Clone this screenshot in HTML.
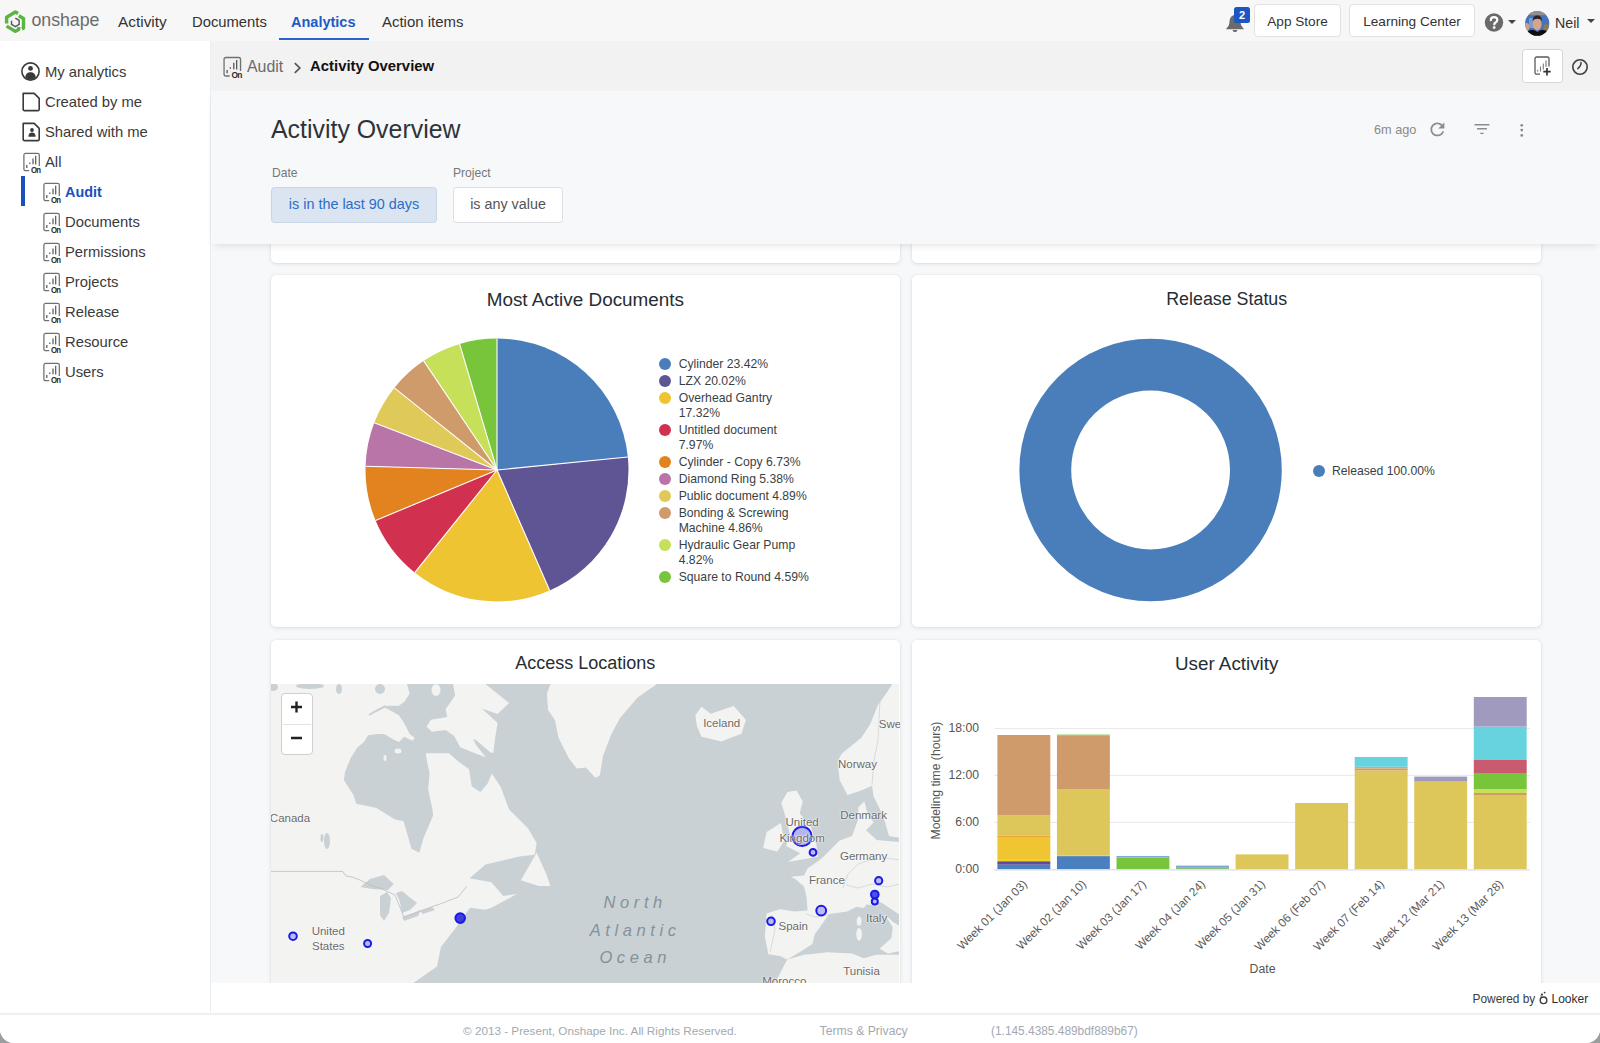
<!DOCTYPE html>
<html><head><meta charset="utf-8">
<style>
*{box-sizing:border-box;margin:0;padding:0}
html,body{width:1600px;height:1043px;overflow:hidden;background:#9a9d9d}
body{font-family:"Liberation Sans",sans-serif;color:#333;position:relative}
#win{position:absolute;left:0;top:0;width:1600px;height:1043px;background:#fff;border-radius:0 0 14px 14px;overflow:hidden}
.abs{position:absolute}
#topnav{position:absolute;left:0;top:0;width:1600px;height:41px;background:#f7f7f7}
.nav{position:absolute;top:13px;font-size:14.5px;color:#333;white-space:nowrap}
#side{position:absolute;left:0;top:41px;width:211px;height:972px;background:#fff;border-right:1.5px solid #e9eef3}
.btn{position:absolute;top:3.7px;height:33.7px;background:#fff;border:1px solid #e2e2e2;border-radius:4px;font-size:13.6px;color:#333;text-align:center;line-height:34px;white-space:nowrap}
.caret{position:absolute;width:0;height:0;border-left:4px solid transparent;border-right:4px solid transparent;border-top:4.5px solid #444}
.si{position:absolute;font-size:14.8px;color:#3a3a3a;white-space:nowrap}
#crumb{position:absolute;left:211px;top:41px;width:1389px;height:49.5px;background:#f2f2f2;z-index:3}
#hdr{position:absolute;left:211px;top:90.5px;width:1389px;height:153.5px;background:#f6f8fa;box-shadow:0 4px 8px -3px rgba(0,0,0,.12);z-index:2}
#tiles{position:absolute;left:211px;top:90px;width:1389px;height:893px;background:#f6f8fa;overflow:hidden}
.tile{position:absolute;background:#fff;border-radius:5px;box-shadow:0 0 0 0.5px rgba(0,0,0,.035),0 1px 4px rgba(40,50,60,.12)}
.ttl{position:absolute;left:0;width:100%;text-align:center;font-size:18.5px;color:#262d33}
.dot{position:absolute;width:12px;height:12px;border-radius:50%}
.lg{position:absolute;font-size:12.2px;line-height:15px;color:#3a3f44;white-space:nowrap}
.xl{position:absolute;width:200px;text-align:right;font-size:11.8px;line-height:14px;margin-top:-7px;color:#5a5a5a;transform-origin:100% 50%;transform:rotate(-45deg);white-space:nowrap}
.yl{position:absolute;width:60px;text-align:right;font-size:12.2px;line-height:15px;color:#555}
.ml{position:absolute;width:100px;text-align:center;font-size:11.5px;line-height:14px;color:#6a6a6a;text-shadow:0 0 2px #fff,0 0 2px #fff;white-space:nowrap}
.oc{position:absolute;width:120px;text-align:center;font-size:16.5px;line-height:20px;color:#85919a;font-style:italic;letter-spacing:4.6px;text-indent:4.6px;white-space:nowrap}
#foot1{position:absolute;left:211px;top:983px;width:1389px;height:30px;background:#fff}
#foot2{position:absolute;left:0;top:1013px;width:1600px;height:30px;background:#fff;border-top:2px solid #eef0f4}
</style></head><body>
<div id="win">
<div id="topnav">
  <svg class="abs" style="left:2.9px;top:8.5px" width="24.7" height="24.7" viewBox="0 0 26 26">
    <g fill="none" stroke="#5ab543" stroke-width="3.6" stroke-linejoin="round" stroke-linecap="butt">
      <path d="M3.8 15.2 V8.6 L13 3.2 L15.8 4.8"/>
      <path d="M16.6 7.2 L21.6 10.1 V20 L20 21"/>
      <path d="M3.8 18 L13 23.6 L16.5 21.5 V19"/>
    </g>
    <path d="M13 9.6 L17 12 V16.3 L13 18.6 L9 16.3 V12.5" fill="none" stroke="#555" stroke-width="1.5" stroke-linejoin="round"/>
  </svg>
  <div class="abs" style="left:31.5px;top:9.8px;font-size:17.8px;color:#6b6b6b;letter-spacing:-0.05px">onshape</div>
  <div class="nav" style="left:118px;top:12.9px;font-size:15.4px">Activity</div>
  <div class="nav" style="left:192px;top:14.2px;font-size:14.8px">Documents</div>
  <div class="nav" style="left:291px;top:13.7px;color:#1d5bc6;font-weight:bold;font-size:14.5px">Analytics</div>
  <div class="abs" style="left:279px;top:38px;width:90px;height:2px;background:#2b63cf"></div>
  <div class="nav" style="left:382px;top:13.3px;font-size:14.95px">Action items</div>
  <svg class="abs" style="left:1225px;top:12px" width="20" height="21" viewBox="0 0 20 21"><path d="M1 17.2 C1.5 15.8 4 14.5 4.3 11.5 L4.6 8.8 C5 5.2 7.2 3 10 3 C12.8 3 15 5.2 15.4 8.8 L15.7 11.5 C16 14.5 18.5 15.8 19 17.2 Z M7.6 18 C7.8 19.4 8.8 20 10 20 C11.2 20 12.2 19.4 12.4 18 Z" fill="#6a6a6a"/></svg>
  <div class="abs" style="left:1234px;top:7px;width:16px;height:16px;background:#1a56c4;border-radius:2.5px;color:#fff;font-weight:bold;font-size:11px;text-align:center;line-height:16px">2</div>
  <div class="btn" style="left:1254px;width:87px">App Store</div>
  <div class="btn" style="left:1349px;width:126px">Learning Center</div>
  <svg class="abs" style="left:1484px;top:12px" width="20" height="21" viewBox="0 0 20 21"><circle cx="10" cy="10.5" r="9.2" fill="#6a6a6a"/><path d="M6.8 8.2 C6.8 6.2 8.2 5.2 10 5.2 C11.9 5.2 13.3 6.3 13.3 8 C13.3 9.6 12.2 10.2 11.2 10.8 C10.5 11.2 10.3 11.6 10.3 12.5" fill="none" stroke="#fff" stroke-width="2.2" stroke-linecap="round"/><circle cx="10.2" cy="15.6" r="1.4" fill="#fff"/></svg>
  <div class="caret" style="left:1508px;top:20px"></div>
  <svg class="abs" style="left:1525px;top:10.5px" width="24.5" height="25" viewBox="0 0 24.5 25"><defs><clipPath id="avc"><ellipse cx="12.2" cy="12.4" rx="12.1" ry="12.4"/></clipPath></defs><g clip-path="url(#avc)">
<rect x="0" y="0" width="25" height="25" fill="#4572b8"/>
<rect x="0" y="0" width="25" height="4.2" fill="#8c9096"/>
<rect x="4" y="7" width="5" height="10" fill="#8fb0dc" opacity=".7"/>
<ellipse cx="1.8" cy="16" rx="2.5" ry="4" fill="#c9a08a"/>
<ellipse cx="21.5" cy="17" rx="3" ry="4" fill="#8a7a55"/>
<ellipse cx="12.2" cy="13.2" rx="4.4" ry="6.2" fill="#d7a38e"/>
<path d="M7.6 10.5 C7.6 6 9.6 4.4 12.3 4.4 C15 4.4 17 6 17 10.5 L16 8.6 C14 7.6 10.6 7.6 8.6 8.8 Z" fill="#2b2320"/>
<path d="M0 25 L0 22 C3 19 7 18.5 10 19.5 L12.4 21 L15 19.5 C18 18.5 22 19 25 22 L25 25 Z" fill="#0e0f12"/>
</g></svg>
  <div class="nav" style="left:1555px;top:15.2px;font-size:14.2px">Neil</div>
  <div class="caret" style="left:1587px;top:18.5px"></div>
</div>
<div id="side">
  <svg width="0" height="0" style="position:absolute"><defs>
    <symbol id="dic" viewBox="0 0 19 21">
      <path d="M6.2 18.7 H2.6 A1.7 1.7 0 0 1 0.9 17 V3.1 A1.7 1.7 0 0 1 2.6 1.4 H14.6 A1.7 1.7 0 0 1 16.3 3.1 V13.9" fill="none" stroke="#707070" stroke-width="1.25"/>
      <path d="M3.8 13 V16 M6.8 10.4 V11.9 M10 6.4 V12.3 M12.7 3.8 V12.6" stroke="#555" stroke-width="1.2" fill="none"/>
      <text x="7.9" y="19.9" font-family="Liberation Sans" font-weight="bold" font-size="7.8" fill="#2a2a2a" letter-spacing="-0.8" transform="scale(1 1.05)" >On</text>
    </symbol>
  </defs></svg>
  <svg class="abs" style="left:21px;top:21px" width="19" height="19" viewBox="0 0 19 19"><circle cx="9.5" cy="9.5" r="8.6" fill="none" stroke="#3a3a3a" stroke-width="1.6"/><circle cx="9.5" cy="6.4" r="2.4" fill="#3a3a3a"/><path d="M4.2 15.6 C4.6 11.8 6.5 10.2 9.5 10.2 C12.5 10.2 14.4 11.8 14.8 15.6 A8 8 0 0 1 4.2 15.6Z" fill="#3a3a3a"/></svg>
  <div class="si" style="left:45px;top:22.6px">My analytics</div>
  <svg class="abs" style="left:21px;top:51px" width="20" height="20" viewBox="0 0 20 20"><path d="M2.2 1.4 H13.2 L18.2 6.4 V17.6 A1 1 0 0 1 17.2 18.6 H3.2 A1 1 0 0 1 2.2 17.6 Z" fill="none" stroke="#3a3a3a" stroke-width="1.6" stroke-linejoin="round"/></svg>
  <div class="si" style="left:45px;top:52.6px">Created by me</div>
  <svg class="abs" style="left:21px;top:81px" width="20" height="20" viewBox="0 0 20 20"><path d="M2.2 1.4 H13.2 L18.2 6.4 V17.6 A1 1 0 0 1 17.2 18.6 H3.2 A1 1 0 0 1 2.2 17.6 Z" fill="none" stroke="#3a3a3a" stroke-width="1.6" stroke-linejoin="round"/><circle cx="11" cy="8" r="1.9" fill="#3a3a3a"/><path d="M7.4 14.8 C7.4 11.6 8.8 10.6 11 10.6 C13.2 10.6 14.6 11.6 14.6 14.8 Z" fill="#3a3a3a"/></svg>
  <div class="si" style="left:45px;top:82.6px">Shared with me</div>
  <svg class="abs" style="left:22.5px;top:110.5px" width="19" height="21"><use href="#dic"/></svg>
  <div class="si" style="left:45px;top:112.6px">All</div>
  <div class="abs" style="left:21px;top:135px;width:4px;height:30px;background:#1a4fbf"></div>
  <svg class="abs" style="left:42.5px;top:140.5px" width="19" height="21"><use href="#dic"/></svg>
  <div class="si" style="left:65px;top:142.9px;color:#1a50c0;font-weight:bold;font-size:14.4px">Audit</div>
  <svg class="abs" style="left:42.5px;top:170.5px" width="19" height="21"><use href="#dic"/></svg>
  <div class="si" style="left:65px;top:172.6px">Documents</div>
  <svg class="abs" style="left:42.5px;top:200.5px" width="19" height="21"><use href="#dic"/></svg>
  <div class="si" style="left:65px;top:202.6px">Permissions</div>
  <svg class="abs" style="left:42.5px;top:230.5px" width="19" height="21"><use href="#dic"/></svg>
  <div class="si" style="left:65px;top:232.6px">Projects</div>
  <svg class="abs" style="left:42.5px;top:260.5px" width="19" height="21"><use href="#dic"/></svg>
  <div class="si" style="left:65px;top:262.6px">Release</div>
  <svg class="abs" style="left:42.5px;top:290.5px" width="19" height="21"><use href="#dic"/></svg>
  <div class="si" style="left:65px;top:292.6px">Resource</div>
  <svg class="abs" style="left:42.5px;top:320.5px" width="19" height="21"><use href="#dic"/></svg>
  <div class="si" style="left:65px;top:322.6px">Users</div>
</div>
<div id="tiles">
  <div class="tile" style="left:60px;top:0px;width:628.7px;height:172.5px"></div>
  <div class="tile" style="left:701px;top:0px;width:629.4px;height:172.5px"><div class="abs" style="left:331.6px;top:143px;width:60px;text-align:center;font-size:12.3px;line-height:15px;color:#555">Date</div></div>
<div class="tile" style="left:60px;top:185px;width:628.7px;height:352px">
<div class="ttl" style="top:14.3px;font-size:18.9px">Most Active Documents</div>
<svg class="abs" style="left:0;top:0" width="628" height="352"><path d="M226.0 195.0 L226.00 63.50 A131.5 131.5 0 0 1 356.85 181.97 Z" fill="#4a7ebb"/><path d="M226.0 195.0 L356.85 181.97 A131.5 131.5 0 0 1 278.68 315.49 Z" fill="#5f5594"/><path d="M226.0 195.0 L278.68 315.49 A131.5 131.5 0 0 1 143.72 297.57 Z" fill="#eec432"/><path d="M226.0 195.0 L143.72 297.57 A131.5 131.5 0 0 1 104.57 245.48 Z" fill="#d2304f"/><path d="M226.0 195.0 L104.57 245.48 A131.5 131.5 0 0 1 94.55 191.20 Z" fill="#e3831f"/><path d="M226.0 195.0 L94.55 191.20 A131.5 131.5 0 0 1 103.25 147.82 Z" fill="#b974a8"/><path d="M226.0 195.0 L103.25 147.82 A131.5 131.5 0 0 1 123.27 112.91 Z" fill="#dfc958"/><path d="M226.0 195.0 L123.27 112.91 A131.5 131.5 0 0 1 152.70 85.82 Z" fill="#cf9b6a"/><path d="M226.0 195.0 L152.70 85.82 A131.5 131.5 0 0 1 188.60 68.93 Z" fill="#c6e05a"/><path d="M226.0 195.0 L188.60 68.93 A131.5 131.5 0 0 1 226.00 63.50 Z" fill="#78c43a"/><line x1="226.0" y1="195.0" x2="226.00" y2="63.50" stroke="#fff" stroke-width="1.1"/><line x1="226.0" y1="195.0" x2="356.85" y2="181.97" stroke="#fff" stroke-width="1.1"/><line x1="226.0" y1="195.0" x2="278.68" y2="315.49" stroke="#fff" stroke-width="1.1"/><line x1="226.0" y1="195.0" x2="143.72" y2="297.57" stroke="#fff" stroke-width="1.1"/><line x1="226.0" y1="195.0" x2="104.57" y2="245.48" stroke="#fff" stroke-width="1.1"/><line x1="226.0" y1="195.0" x2="94.55" y2="191.20" stroke="#fff" stroke-width="1.1"/><line x1="226.0" y1="195.0" x2="103.25" y2="147.82" stroke="#fff" stroke-width="1.1"/><line x1="226.0" y1="195.0" x2="123.27" y2="112.91" stroke="#fff" stroke-width="1.1"/><line x1="226.0" y1="195.0" x2="152.70" y2="85.82" stroke="#fff" stroke-width="1.1"/><line x1="226.0" y1="195.0" x2="188.60" y2="68.93" stroke="#fff" stroke-width="1.1"/></svg>
<div class="dot" style="left:388.3px;top:83.2px;background:#4a7ebb"></div><div class="lg" style="left:407.7px;top:82.4px">Cylinder 23.42%</div><div class="dot" style="left:388.3px;top:100.2px;background:#5f5594"></div><div class="lg" style="left:407.7px;top:99.4px">LZX 20.02%</div><div class="dot" style="left:388.3px;top:117.2px;background:#eec432"></div><div class="lg" style="left:407.7px;top:116.4px">Overhead Gantry</div><div class="lg" style="left:407.7px;top:131.4px">17.32%</div><div class="dot" style="left:388.3px;top:149.2px;background:#d2304f"></div><div class="lg" style="left:407.7px;top:148.4px">Untitled document</div><div class="lg" style="left:407.7px;top:163.4px">7.97%</div><div class="dot" style="left:388.3px;top:181.2px;background:#e3831f"></div><div class="lg" style="left:407.7px;top:180.4px">Cylinder - Copy 6.73%</div><div class="dot" style="left:388.3px;top:198.2px;background:#b974a8"></div><div class="lg" style="left:407.7px;top:197.4px">Diamond Ring 5.38%</div><div class="dot" style="left:388.3px;top:215.2px;background:#dfc958"></div><div class="lg" style="left:407.7px;top:214.4px">Public document 4.89%</div><div class="dot" style="left:388.3px;top:232.2px;background:#cf9b6a"></div><div class="lg" style="left:407.7px;top:231.4px">Bonding &amp; Screwing</div><div class="lg" style="left:407.7px;top:246.4px">Machine 4.86%</div><div class="dot" style="left:388.3px;top:264.2px;background:#c6e05a"></div><div class="lg" style="left:407.7px;top:263.4px">Hydraulic Gear Pump</div><div class="lg" style="left:407.7px;top:278.4px">4.82%</div><div class="dot" style="left:388.3px;top:296.2px;background:#78c43a"></div><div class="lg" style="left:407.7px;top:295.4px">Square to Round 4.59%</div>
</div>
<div class="tile" style="left:701px;top:185px;width:629.4px;height:352px">
<div class="ttl" style="top:14.3px;font-size:17.85px">Release Status</div>
<svg class="abs" style="left:0;top:0" width="628" height="352"><circle cx="238.6" cy="195.0" r="105.30" fill="none" stroke="#4a7ebb" stroke-width="51.80"/></svg>
<div class="dot" style="left:400.7px;top:190.3px;background:#4a7ebb"></div>
<div class="lg" style="left:419.9px;top:188.8px">Released 100.00%</div>
</div>
<div class="tile" style="left:60px;top:549.7px;width:628.7px;height:380px;overflow:hidden">
<div class="ttl" style="top:13.8px;font-size:18px">Access Locations</div>
<svg class="abs" style="left:0;top:44px" width="628" height="300" viewBox="271 684 628 300"><rect x="271" y="684" width="628" height="300" fill="#c9d1d4"/><polygon points="271.0,684.0 407.0,684.0 409.6,693.7 404.3,701.8 398.9,705.8 388.2,705.8 384.1,707.1 398.9,715.2 404.3,723.2 409.6,734.0 415.0,738.0 412.3,740.7 404.3,736.7 398.9,742.0 393.5,739.4 384.1,734.0 377.4,734.0 368.0,735.3 364.0,742.0 357.3,747.4 350.6,758.2 345.2,771.6 343.8,780.0 353.4,795.0 356.3,803.7 376.4,808.0 395.1,819.5 403.6,821.3 411.5,848.8 419.3,852.7 423.2,838.9 433.1,815.4 432.5,809.4 428.2,789.3 429.6,773.5 426.8,760.5 425.8,753.3 449.0,753.3 457.7,761.1 468.9,769.1 471.8,786.4 480.4,792.1 487.6,783.5 491.9,773.5 500.5,786.4 509.1,809.4 527.8,828.1 536.6,842.9 534.7,854.7 519.0,856.6 485.5,864.5 469.8,878.2 491.4,882.2 503.2,895.9 517.0,894.0 491.4,907.7 485.5,909.7 470.0,907.7 454.7,929.3 440.9,947.0 437.0,966.6 413.4,983.0 271.0,983.0" fill="#f3f3f2"/><polygon points="453.1,684.0 485.4,684.0 509.1,703.0 497.6,714.0 481.8,708.5 497.6,723.1 494.8,740.4 493.3,753.3 490.0,752.0 476.0,740.0 473.2,739.0 476.0,745.0 486.1,757.6 470.6,751.6 460.2,747.3 454.2,736.1 445.6,730.0 431.8,731.8 426.6,726.6 430.9,719.7 447.3,717.1 445.6,709.3 455.1,695.5" fill="#f3f3f2"/><polygon points="550.4,684.0 546.9,693.8 548.1,709.9 555.0,720.3 558.4,737.5 568.8,758.3 576.8,768.6 586.0,767.5 595.2,777.8 599.8,775.5 603.0,756.0 611.0,735.0 620.0,718.0 637.6,697.5 657.0,684.0" fill="#f3f3f2"/><polygon points="536.6,852.7 520.9,880.2 538.6,886.0 550.4,886.0 546.4,874.3" fill="#f3f3f2"/><polygon points="695.3,715.3 701.5,706.8 710.7,713.8 733.7,706.1 746.0,719.9 741.4,733.7 721.4,741.4 701.5,736.8 696.9,726.0" fill="#f3f3f2"/><polygon points="787.4,792.0 796.6,790.5 802.7,801.2 799.7,813.5 810.4,825.8 816.3,844.3 818.0,856.8 787.9,862.1 800.3,853.2 786.1,846.1 790.0,835.0 785.9,818.1 781.3,802.7" fill="#f3f3f2"/><polygon points="763.1,847.9 766.6,831.9 780.8,823.1 784.3,840.8 777.3,851.4" fill="#f3f3f2"/><polygon points="892.3,684.0 887.5,691.5 877.9,704.9 870.3,724.1 861.6,737.5 852.0,745.2 841.5,753.8 837.7,761.5 839.6,780.0 847.5,795.0 861.3,790.4 872.1,785.8 873.6,796.6 879.8,808.8 885.0,822.0 889.0,836.0 900.0,838.0 900.0,684.0" fill="#f3f3f2"/><polygon points="858.3,807.3 864.4,801.2 867.5,813.4 873.6,822.6 866.0,830.3 876.7,840.0 900.0,842.0 900.0,951.1 887.9,953.5 879.5,948.7 891.5,937.9 892.7,927.1 884.3,914.0 875.9,905.6 866.3,904.4 863.9,908.0 856.7,906.8 847.1,911.6 829.2,914.0 814.8,934.3 812.4,944.0 801.6,951.1 787.2,959.5 780.0,956.0 768.4,954.3 764.8,936.6 766.6,913.5 780.0,909.2 794.4,911.6 807.6,910.4 806.4,896.0 804.0,886.4 795.6,879.2 790.8,876.8 804.0,875.6 807.6,868.4 819.6,860.0 823.4,856.8 839.3,840.8 852.0,836.0 858.0,820.0" fill="#f3f3f2"/><polygon points="775.0,983.0 787.2,959.5 804.0,954.7 828.0,952.3 852.0,953.5 863.9,958.3 875.9,954.7 900.0,954.7 900.0,983.0" fill="#f3f3f2"/><ellipse cx="273" cy="687" rx="5" ry="4" fill="#c9d1d4"/><ellipse cx="310" cy="686" rx="14" ry="3" fill="#c9d1d4"/><ellipse cx="339" cy="689" rx="3" ry="5" fill="#c9d1d4"/><ellipse cx="380" cy="689" rx="5" ry="5" fill="#c9d1d4"/><ellipse cx="327" cy="841" rx="3" ry="8" fill="#c9d1d4"/><ellipse cx="322" cy="838" rx="1.5" ry="4" fill="#c9d1d4"/><path d="M386 706 L376 711 L369 715" stroke="#c9d1d4" stroke-width="2" fill="none"/><polygon points="360.4,887.0 370.0,879.0 384.0,875.0 393.8,884.0 388.0,890.0 372.0,889.0" fill="#c9d1d4"/><polygon points="380.0,896.0 387.0,892.0 391.0,898.0 389.0,913.0 384.0,921.0 380.0,915.0" fill="#c9d1d4"/><polygon points="396.0,893.0 402.0,891.0 408.0,896.0 417.0,903.0 410.0,910.0 402.0,913.0 400.0,902.0" fill="#c9d1d4"/><polygon points="402.0,917.0 414.0,913.0 421.0,910.0 418.0,916.0 404.0,921.0" fill="#c9d1d4"/><polygon points="420.0,911.0 432.0,907.0 435.0,910.0 423.0,914.0" fill="#c9d1d4"/><polygon points="469.8,878.2 485.0,866.0 500.0,862.0 510.0,866.0 495.0,873.0 480.0,878.0" fill="#c9d1d4"/><ellipse cx="398" cy="751" rx="3.5" ry="2.5" fill="#f3f3f2"/><ellipse cx="385" cy="758" rx="1.5" ry="3" fill="#f3f3f2"/><ellipse cx="436" cy="690" rx="4.5" ry="6" fill="#f3f3f2"/><ellipse cx="859.1" cy="921.2" rx="2.4" ry="4.6" fill="#f3f3f2"/><ellipse cx="859.1" cy="934.3" rx="2.8" ry="6.4" fill="#f3f3f2"/><polygon points="876.0,901.0 882.0,903.0 900.0,915.0 900.0,926.0 893.0,922.0 878.0,908.0" fill="#c9d1d4"/><path d="M271 871.4 H342.7 L346 876 L352 877 L360 880 L372 886 L380 888 L395 895 L404 917 L420 911 L440 904 L458 897 L467 886" fill="none" stroke="#bdbdbd" stroke-width="0.8"/><path d="M880 700 L878 740 L874 760 L872 785 M806 914 L815 917 L829 915 M843 888 L848 874 L858 864 L870 860 L885 858 L900 860 M846 885 L858 888 L872 884 L887 887 L900 884 M770 952 L775 930 L772 915" fill="none" stroke="#cfcfcf" stroke-width="0.7"/><circle cx="802.1" cy="836.4" r="9.6" fill="rgba(120,120,240,0.5)" stroke="#1a1ae6" stroke-width="2"/><circle cx="813" cy="852.4" r="3.4000000000000004" fill="rgba(120,120,240,0.45)" stroke="#1a1ae6" stroke-width="2"/><circle cx="878.7" cy="880.7" r="3.5999999999999996" fill="rgba(120,120,240,0.45)" stroke="#1a1ae6" stroke-width="2"/><circle cx="821.2" cy="910.6" r="4.9" fill="rgba(120,120,240,0.45)" stroke="#1a1ae6" stroke-width="2"/><circle cx="771" cy="921.3" r="3.8" fill="rgba(120,120,240,0.45)" stroke="#1a1ae6" stroke-width="2"/><circle cx="874.8" cy="901.6" r="3" fill="rgba(120,120,240,0.45)" stroke="#1a1ae6" stroke-width="2"/><circle cx="874.8" cy="894.5" r="3.8" fill="rgba(40,40,230,0.8)" stroke="#1a1ae6" stroke-width="2"/><circle cx="293" cy="936.2" r="3.8" fill="rgba(120,120,240,0.45)" stroke="#1a1ae6" stroke-width="2"/><circle cx="367.6" cy="943.5" r="3.5" fill="rgba(120,120,240,0.45)" stroke="#1a1ae6" stroke-width="2"/><circle cx="460.2" cy="918.1" r="4.8" fill="rgba(30,30,220,0.85)" stroke="#1a1ae6" stroke-width="2"/></svg><div class="ml" style="left:-31.0px;top:171.3px">Canada</div><div class="ml" style="left:7.3px;top:284.3px">United</div><div class="ml" style="left:7.3px;top:299.0px">States</div><div class="ml" style="left:400.7px;top:76.7px">Iceland</div><div class="ml" style="left:569.0px;top:77.5px">Swe</div><div class="ml" style="left:536.5px;top:117.8px">Norway</div><div class="ml" style="left:542.6px;top:168.0px">Denmark</div><div class="ml" style="left:481.1px;top:175.7px">United</div><div class="ml" style="left:481.1px;top:191.1px">Kingdom</div><div class="ml" style="left:542.6px;top:208.9px">Germany</div><div class="ml" style="left:505.9px;top:233.7px">France</div><div class="ml" style="left:472.2px;top:279.3px">Spain</div><div class="ml" style="left:555.6px;top:271.5px">Italy</div><div class="ml" style="left:540.5px;top:324.2px">Tunisia</div><div class="ml" style="left:463.3px;top:334.0px">Morocco</div><div class="oc" style="left:301.9px;top:252.8px">North</div><div class="oc" style="left:301.9px;top:280.3px">Atlantic</div><div class="oc" style="left:301.9px;top:307.8px">Ocean</div><div class="abs" style="left:10px;top:53px;width:31.5px;height:62px;background:#fff;border:1.5px solid #cfcfcf;border-radius:4px"></div>
<div class="abs" style="left:11.5px;top:84px;width:28.5px;height:1px;background:#e2e2e2"></div>
<svg class="abs" style="left:18px;top:60px" width="14" height="14" viewBox="0 0 14 14"><path d="M7.5 1.5 V12.5 M2 7 H13" stroke="#222" stroke-width="2.4"/></svg>
<svg class="abs" style="left:18px;top:91px" width="14" height="14" viewBox="0 0 14 14"><path d="M2 7 H13" stroke="#222" stroke-width="2.4"/></svg>
</div>
<div class="tile" style="left:701px;top:549.7px;width:629.4px;height:380px">
<div class="ttl" style="top:13.8px;font-size:18.8px">User Activity</div>
<svg class="abs" style="left:0;top:0" width="628" height="380"><rect x="82" y="87.9" width="536" height="1" fill="#e8e8e8"/><rect x="82" y="134.9" width="536" height="1" fill="#e8e8e8"/><rect x="82" y="181.9" width="536" height="1" fill="#e8e8e8"/><rect x="85.40" y="224.70" width="52.9" height="4.70" fill="#4a80c0"/><rect x="85.40" y="221.20" width="52.9" height="3.50" fill="#5b4f9a"/><rect x="85.40" y="219.90" width="52.9" height="1.30" fill="#f5d22a"/><rect x="85.40" y="197.00" width="52.9" height="22.90" fill="#efc631"/><rect x="85.40" y="195.80" width="52.9" height="1.20" fill="#e8a23c"/><rect x="85.40" y="175.50" width="52.9" height="20.30" fill="#ddc75a"/><rect x="85.40" y="95.00" width="52.9" height="80.50" fill="#cf9b6b"/><rect x="144.95" y="216.10" width="52.9" height="13.30" fill="#4a80c0"/><rect x="144.95" y="215.20" width="52.9" height="0.90" fill="#f0d040"/><rect x="144.95" y="149.00" width="52.9" height="66.20" fill="#ddc75a"/><rect x="144.95" y="95.60" width="52.9" height="53.40" fill="#cf9b6b"/><rect x="144.95" y="94.60" width="52.9" height="1.00" fill="#78c43a"/><rect x="204.50" y="217.60" width="52.9" height="11.80" fill="#78c43a"/><rect x="204.50" y="216.00" width="52.9" height="1.60" fill="#7fa8d8"/><rect x="264.05" y="227.00" width="52.9" height="2.40" fill="#8cc27a"/><rect x="264.05" y="225.60" width="52.9" height="1.40" fill="#7fa8d8"/><rect x="323.60" y="214.40" width="52.9" height="15.00" fill="#ddc75a"/><rect x="383.15" y="163.00" width="52.9" height="66.40" fill="#ddc75a"/><rect x="442.70" y="130.40" width="52.9" height="99.00" fill="#ddc75a"/><rect x="442.70" y="128.40" width="52.9" height="2.00" fill="#cf9b6b"/><rect x="442.70" y="126.80" width="52.9" height="1.60" fill="#d8a86a"/><rect x="442.70" y="117.00" width="52.9" height="9.80" fill="#66d3de"/><rect x="502.25" y="141.60" width="52.9" height="87.80" fill="#ddc75a"/><rect x="502.25" y="136.60" width="52.9" height="5.00" fill="#a09abf"/><rect x="561.80" y="155.00" width="52.9" height="74.40" fill="#ddc75a"/><rect x="561.80" y="153.00" width="52.9" height="2.00" fill="#cf9b6b"/><rect x="561.80" y="149.00" width="52.9" height="4.00" fill="#c6e05a"/><rect x="561.80" y="133.00" width="52.9" height="16.00" fill="#78c43a"/><rect x="561.80" y="120.00" width="52.9" height="13.00" fill="#c95b70"/><rect x="561.80" y="86.60" width="52.9" height="33.40" fill="#66d3de"/><rect x="561.80" y="57.00" width="52.9" height="29.60" fill="#a09abf"/><rect x="82" y="229.2" width="536" height="1.4" fill="#dce2ee"/></svg>
<div class="yl" style="left:7px;top:80.9px">18:00</div><div class="yl" style="left:7px;top:127.9px">12:00</div><div class="yl" style="left:7px;top:174.9px">6:00</div><div class="yl" style="left:7px;top:221.9px">0:00</div>
<div class="abs" style="left:-56.5px;top:133.0px;width:160px;height:15px;line-height:15px;text-align:center;font-size:12.2px;color:#555;transform:rotate(-90deg)">Modeling time (hours)</div>
<div class="xl" style="left:-87.3px;top:242.5px">Week 01 (Jan 03)</div><div class="xl" style="left:-27.8px;top:242.5px">Week 02 (Jan 10)</div><div class="xl" style="left:31.8px;top:242.5px">Week 03 (Jan 17)</div><div class="xl" style="left:91.3px;top:242.5px">Week 04 (Jan 24)</div><div class="xl" style="left:150.9px;top:242.5px">Week 05 (Jan 31)</div><div class="xl" style="left:210.5px;top:242.5px">Week 06 (Feb 07)</div><div class="xl" style="left:270.0px;top:242.5px">Week 07 (Feb 14)</div><div class="xl" style="left:329.5px;top:242.5px">Week 12 (Mar 21)</div><div class="xl" style="left:389.1px;top:242.5px">Week 13 (Mar 28)</div>
<div class="abs" style="left:320.6px;top:322.8px;width:60px;line-height:15px;text-align:center;font-size:12.3px;color:#555">Date</div>
</div>
</div>
<div id="crumb">
  <svg class="abs" style="left:11.6px;top:15.3px" width="20.5" height="22.5" viewBox="0 0 19 21"><use href="#dic"/></svg>
  <div class="abs" style="left:36px;top:17.4px;font-size:15.9px;color:#6b6b6b">Audit</div>
  <svg class="abs" style="left:82px;top:20.5px" width="9" height="12" viewBox="0 0 9 12"><path d="M1.8 1.2 L6.8 6 L1.8 10.8" fill="none" stroke="#555" stroke-width="1.7"/></svg>
  <div class="abs" style="left:99px;top:17.4px;font-size:14.9px;font-weight:bold;color:#111">Activity Overview</div>
  <div class="abs" style="left:1311px;top:7.7px;width:41.3px;height:34.3px;background:#fff;border:1px solid #d6d6d6;border-radius:3.5px"></div>
  <svg class="abs" style="left:1322.5px;top:14.9px" width="19" height="20" viewBox="0 0 19 20">
    <path d="M6 18.2 H2.6 A1.6 1.6 0 0 1 1 16.6 V2.6 A1.6 1.6 0 0 1 2.6 1 H13.4 A1.6 1.6 0 0 1 15 2.6 V10.5" fill="none" stroke="#5a5a5a" stroke-width="1.3"/>
    <path d="M3.7 13.8 V15.6 M6.5 10.4 V15.6 M9.3 7.6 V13.6 M12 4.4 V11" stroke="#777" stroke-width="1.1" fill="none"/>
    <path d="M13 12 V19.4 M9.3 15.7 H16.7" stroke="#333" stroke-width="1.7" fill="none"/>
  </svg>
  <svg class="abs" style="left:1359px;top:15.5px" width="20" height="20" viewBox="0 0 20 20"><circle cx="10" cy="10" r="7.2" fill="none" stroke="#3f3f3f" stroke-width="1.6"/><path d="M11 5.4 C11.3 7.5 10.5 9.3 7.8 11.6" fill="none" stroke="#3f3f3f" stroke-width="1.5" stroke-linecap="round"/></svg>
</div>
<div id="hdr">
  <div class="abs" style="left:60px;top:24.6px;font-size:24.9px;color:#2e3338">Activity Overview</div>
  <div class="abs" style="left:61px;top:75.4px;font-size:12.1px;color:#777">Date</div>
  <div class="abs" style="left:242px;top:75.4px;font-size:12.1px;color:#777">Project</div>
  <div class="abs" style="left:60px;top:96.9px;width:166px;height:35.5px;background:#dbe5f2;border:1px solid #c8d5e6;border-radius:3.5px;font-size:14.4px;color:#2d6cc6;text-align:center;line-height:33.5px">is in the last 90 days</div>
  <div class="abs" style="left:242px;top:96.9px;width:110px;height:35.5px;background:#fff;border:1px solid #dcdee1;border-radius:3.5px;font-size:14.35px;color:#555;text-align:center;line-height:33.5px">is any value</div>
  <div class="abs" style="left:1163px;top:32.2px;font-size:12.7px;color:#8a8a8a">6m ago</div>
  <svg class="abs" style="left:1216.4px;top:28.8px" width="20.8" height="20.8" viewBox="0 0 24 24"><path d="M17.65 6.35C16.2 4.9 14.21 4 12 4c-4.42 0-7.99 3.58-7.99 8s3.57 8 7.99 8c3.73 0 6.84-2.55 7.73-6h-2.08c-.82 2.33-3.04 4-5.65 4-3.31 0-6-2.69-6-6s2.69-6 6-6c1.66 0 3.14.69 4.22 1.78L13 11h7V4l-2.35 2.35z" fill="#8c8c8c"/></svg>
  <svg class="abs" style="left:1260.5px;top:28.8px" width="19.9" height="19.9" viewBox="0 0 24 24"><path d="M10 18.2h4v-1.7h-4v1.7zM3 6.1v1.7h18V6.1H3zm3 6.6h12v-1.7H6v1.7z" fill="#8c8c8c"/></svg>
  <svg class="abs" style="left:1307px;top:31px" width="8" height="16" viewBox="0 0 8 16"><circle cx="3.75" cy="3.3" r="1.35" fill="#888"/><circle cx="3.75" cy="8.1" r="1.35" fill="#888"/><circle cx="3.75" cy="13.4" r="1.35" fill="#888"/></svg>
</div>
<div id="foot1">
  <div class="abs" style="left:1261.5px;top:8.5px;font-size:11.9px;color:#3a3a40">Powered by</div>
  <svg class="abs" style="left:1327px;top:8px" width="12" height="14" viewBox="0 0 12 14"><circle cx="5.5" cy="9.3" r="3.3" fill="none" stroke="#3a3a40" stroke-width="1.4"/><circle cx="4" cy="3.6" r="1.1" fill="#3a3a40"/><circle cx="6.6" cy="1.6" r="0.9" fill="#3a3a40"/><path d="M3.3 5.8 L2.6 4.6" stroke="#3a3a40" stroke-width="1"/></svg>
  <div class="abs" style="left:1340.5px;top:8.5px;font-size:12px;color:#2d2d33">Looker</div>
</div>
<div id="foot2">
  <div class="abs" style="left:463px;top:9px;font-size:11.73px;color:#a3a9b1">© 2013 - Present, Onshape Inc. All Rights Reserved.</div>
  <div class="abs" style="left:819.6px;top:9px;font-size:12.2px;color:#a3a9b1">Terms &amp; Privacy</div>
  <div class="abs" style="left:991px;top:9px;font-size:11.9px;color:#a3a9b1">(1.145.4385.489bdf889b67)</div>
</div>
</div>
</body></html>
